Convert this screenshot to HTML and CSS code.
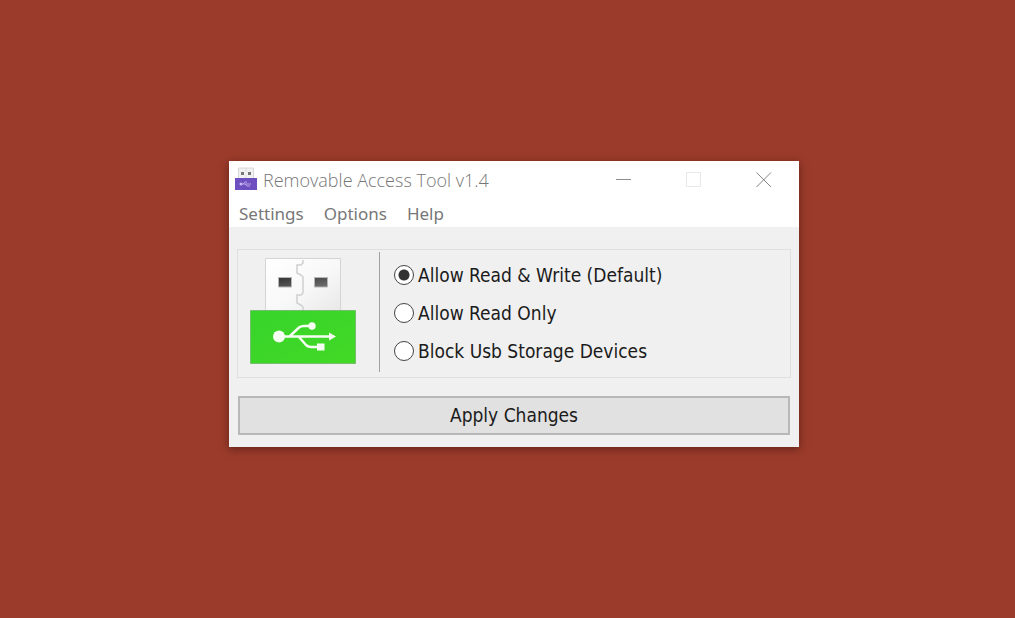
FILE: index.html
```html
<!DOCTYPE html>
<html lang="en">
<head>
<meta charset="utf-8">
<meta name="viewport" content="width=device-width, initial-scale=1">
<title>Removable Access Tool v1.4</title>
<link rel="stylesheet" href="styles.css">
</head>
<body class="desktop">
<main class="window">
  <header class="titlebar">
    <svg class="app-icon" viewBox="0 0 22 24" aria-hidden="true">
      <path d="M3.500 1H18.500V12H3.500Z" fill="#f1f1f1" stroke="#d8d8d8"/>
      <path d="M6 5h3v3H6zM13 5h3v3h-3z" fill="#777"/>
      <path d="M11 1v4M11 8v3" stroke="#ddd"/>
      <path d="M0 11H22V23H0Z" fill="#6e4fc0"/>
      <path d="M5 17H16M8 17l2-2h2M10 17l2 2h3" fill="none" stroke="#b9a5e8"/>
      <circle cx="6" cy="17" r="1.500" fill="#c9b9f0"/>
    </svg>
    <h1 class="title">Removable Access Tool v1.4</h1>
    <div class="controls">
      <button class="control" type="button" aria-label="Minimize"><svg class="glyph" viewBox="0 0 16 16"><path d="M0 7.500H15" stroke="#8c8c8c"/></svg></button>
      <button class="control" type="button" aria-label="Maximize" disabled><svg class="glyph" viewBox="0 0 16 16"><path d="M.5.500H14.500V14.500H.5Z" fill="none" stroke="#e8e8e4"/></svg></button>
      <button class="control" type="button" aria-label="Close"><svg class="glyph" viewBox="0 0 16 16"><path d="M.5.500 15 15M15 .5.500 15" stroke="#858585"/></svg></button>
    </div>
  </header>
  <nav class="menubar">
    <button class="menu" type="button">Settings</button>
    <button class="menu" type="button">Options</button>
    <button class="menu" type="button">Help</button>
  </nav>
  <form class="content">
    <div class="group">
      <div class="picture">
        <svg class="usb" viewBox="0 0 108 108" aria-hidden="true">
          <defs>
            <linearGradient id="metal" x1="0" y1="0" x2="1" y2="1"><stop offset="0" stop-color="#fff"/><stop offset=".55" stop-color="#f8f8f8"/><stop offset="1" stop-color="#e8e8e8"/></linearGradient>
            <linearGradient id="hole" x1="0" y1="0" x2="1" y2="1"><stop offset="0" stop-color="#333"/><stop offset="1" stop-color="#707070"/></linearGradient>
            <linearGradient id="green" x1="0" y1="0" x2="1" y2="1"><stop offset="0" stop-color="#37d42b"/><stop offset="1" stop-color="#43d926"/></linearGradient>
          </defs>
          <path d="M16.500 .5H91.500V54H16.500Z" fill="url(#metal)" stroke="#d4d4d4"/>
          <path d="M54 2V5L52 7H48V15L52 17 54 19V35L52 37H48V45L52 47 54 49V53" fill="none" stroke="#cfcfcf" stroke-width="1.500"/>
          <path d="M29.500 19.500H42.500V29H29.500ZM65.500 19.500H78.500V29H65.500Z" fill="url(#hole)" stroke="#b5b5b5"/>
          <path d="M1.500 52.500H106.500V105.500H1.500Z" fill="url(#green)" stroke="#77bd70"/>
          <g fill="none" stroke="#f5fff2" stroke-width="2.500">
            <path d="M30 78.500H80M41 78 50 69.500Q52 68 55 68H60M50 79 57 87Q59 89 62 89H68"/>
          </g>
          <g fill="#f5fff2"><circle cx="30" cy="78.500" r="6"/><circle cx="63" cy="68" r="3.700"/><path d="M68 85.500H75.500V92.500H68ZM80 74.500 87 78.500 80 82.500Z"/></g>
        </svg>
      </div>
      <div class="choices">
        <label class="choice"><input class="radio" type="radio" name="access" checked>Allow Read &amp; Write (Default)</label>
        <label class="choice"><input class="radio" type="radio" name="access">Allow Read Only</label>
        <label class="choice"><input class="radio" type="radio" name="access">Block Usb Storage Devices</label>
      </div>
    </div>
    <button class="apply" type="button">Apply Changes</button>
  </form>
</main>
</body>
</html>
```
FILE: styles.css
```css
* { box-sizing: border-box; }
.desktop {
  margin: 0;
  min-height: 100vh;
  padding: 0 0 10px 13px;
  display: grid;
  place-items: center;
  background: #9b3b2b;
  font-family: "DejaVu Sans Condensed", "Noto Sans", sans-serif;
}
.window {
  width: 100%;
  max-width: 570px;
  background: #f0f0f0;
  box-shadow: 0 2px 8px rgba(40, 10, 5, 0.5);
}
.titlebar {
  display: flex;
  align-items: center;
  height: 38px;
  padding-left: 6px;
  background: #fff;
}
.app-icon { width: 22px; height: 24px; margin-bottom: 2px; }
.title {
  flex: 1;
  margin: 0 0 0 6px;
  font-family: "Open Sans", "Noto Sans", sans-serif;
  font-size: 18px;
  font-weight: 300;
  line-height: 24px;
  color: #777;
}
.controls { display: flex; }
.control {
  display: grid;
  place-items: center;
  width: 70px;
  height: 38px;
  padding: 0;
  border: 0;
  background: none;
}
.glyph { display: block; width: 16px; height: 16px; }
.menubar {
  display: flex;
  gap: 20px;
  height: 28px;
  padding-left: 10px;
  background: #fff;
}
.menu {
  padding: 0;
  border: 0;
  background: none;
  font: 17px/30px "Noto Sans", sans-serif;
  color: #777;
}
.content { padding: 22px 8px 12px; }
.group {
  display: flex;
  padding: 2px 0 5px;
  border: 1px solid #dfdfdf;
}
.picture {
  padding: 6px 22px 6px 11px;
  border-right: 1px solid #a0a0a0;
}
.usb { display: block; width: 108px; height: 108px; }
.choices {
  display: flex;
  flex-direction: column;
  gap: 10px;
  padding: 9px 0 0 14px;
}
.choice {
  display: flex;
  align-items: center;
  gap: 4px;
  font-size: 19px;
  line-height: 28px;
  color: #1b1b1b;
}
.radio {
  appearance: none;
  width: 20px;
  height: 20px;
  margin: 0;
  border: 1px solid #444;
  border-radius: 50%;
  background: #fff;
}
.radio:checked { background: radial-gradient(circle, #333 5px, #fff 6px); }
.apply {
  display: block;
  width: calc(100% - 2px);
  margin: 18px 1px 0;
  padding: 0;
  border: 2px solid #b8b8b8;
  background: #e1e1e1;
  font: 19px/35px "DejaVu Sans Condensed", "Noto Sans", sans-serif;
  color: #1b1b1b;
}
```
